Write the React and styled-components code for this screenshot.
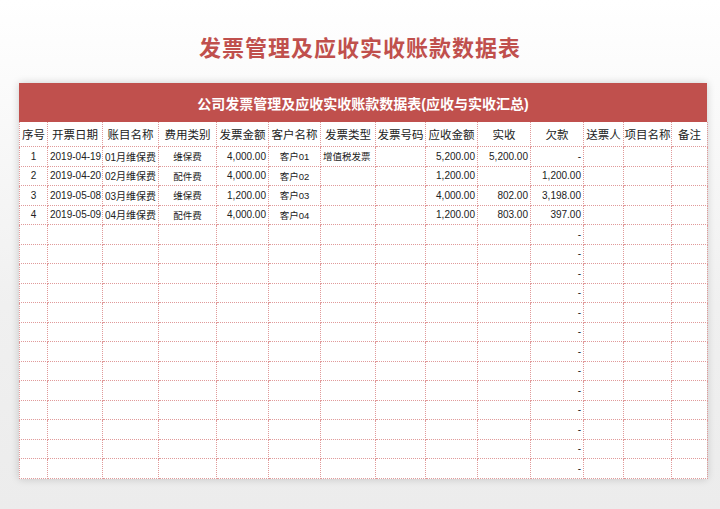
import React from "react";
import styled, { createGlobalStyle } from "styled-components";

const Global = createGlobalStyle`
  body { margin: 0; background: #f2f2f2; font-family: "Liberation Sans", "Noto Sans CJK SC", sans-serif; }
`;

const Page = styled.div`
  width: 720px;
  height: 509px;
  display: flex;
  flex-direction: column;
  align-items: center;
  background: linear-gradient(#ffffff, #f0f0f0 60%, #ececec);
`;

const Title = styled.h1`
  margin: 30px 0 0;
  height: 53px;
  font-size: 22px;
  font-weight: bold;
  color: #c0504d;
  letter-spacing: 1px;
`;

const Card = styled.div`
  width: 688px;
  margin-left: 6px;
  background: #fff;
  box-shadow: 0 0 8px rgba(0, 0, 0, 0.18);
`;

const Banner = styled.div`
  height: 39px;
  background: #c0504d;
  color: #fff;
  font-weight: bold;
  font-size: 14px;
  display: flex;
  align-items: center;
  justify-content: center;
`;

const Table = styled.table`
  border-collapse: collapse;
  table-layout: fixed;
  width: 688px;
  font-size: 10px;
  color: #222;
`;

const Th = styled.th`
  height: 24px;
  font-weight: normal;
  font-size: 11.5px;
  border: 1px dotted #e09a9a;
  border-top: none;
  padding: 0;
  white-space: nowrap;
  overflow: hidden;
`;

const Td = styled.td`
  height: 18.5px;
  padding: 0 2px;
  border: 1px dotted #e09a9a;
  text-align: ${(p) => p.$align || "center"};
  white-space: nowrap;
  overflow: hidden;
  font-size: ${(p) => (p.$small ? "9.5px" : "10px")};
`;

const widths = [28, 55, 56, 58, 52, 52, 55, 50, 52, 53, 53, 40, 48, 36];
const heads = ["序号", "开票日期", "账目名称", "费用类别", "发票金额", "客户名称", "发票类型", "发票号码", "应收金额", "实收", "欠款", "送票人", "项目名称", "备注"];
const aligns = ["center", "center", "center", "center", "right", "center", "left", "center", "right", "right", "right", "center", "center", "center"];
const small = [false, false, false, true, false, true, true, false, false, false, false, false, false, false];

const data = [
  ["1", "2019-04-19", "01月维保费", "维保费", "4,000.00", "客户01", "增值税发票", "", "5,200.00", "5,200.00", "-", "", "", ""],
  ["2", "2019-04-20", "02月维保费", "配件费", "4,000.00", "客户02", "", "", "1,200.00", "", "1,200.00", "", "", ""],
  ["3", "2019-05-08", "03月维保费", "维保费", "1,200.00", "客户03", "", "", "4,000.00", "802.00", "3,198.00", "", "", ""],
  ["4", "2019-05-09", "04月维保费", "配件费", "4,000.00", "客户04", "", "", "1,200.00", "803.00", "397.00", "", "", ""],
];
const rows = [...data, ...Array.from({ length: 13 }, () => heads.map((_, i) => (i === 10 ? "-" : "")))];

export default function App() {
  return (
    <Page>
      <Global />
      <Title>发票管理及应收实收账款数据表</Title>
      <Card>
        <Banner>公司发票管理及应收实收账款数据表(应收与实收汇总)</Banner>
        <Table>
          <colgroup>
            {widths.map((w, i) => <col key={i} style={{ width: w }} />)}
          </colgroup>
          <thead>
            <tr>{heads.map((h) => <Th key={h}>{h}</Th>)}</tr>
          </thead>
          <tbody>
            {rows.map((r, ri) => (
              <tr key={ri}>
                {r.map((c, ci) => (
                  <Td key={ci} $align={aligns[ci]} $small={small[ci]}>{c}</Td>
                ))}
              </tr>
            ))}
          </tbody>
        </Table>
      </Card>
    </Page>
  );
}
